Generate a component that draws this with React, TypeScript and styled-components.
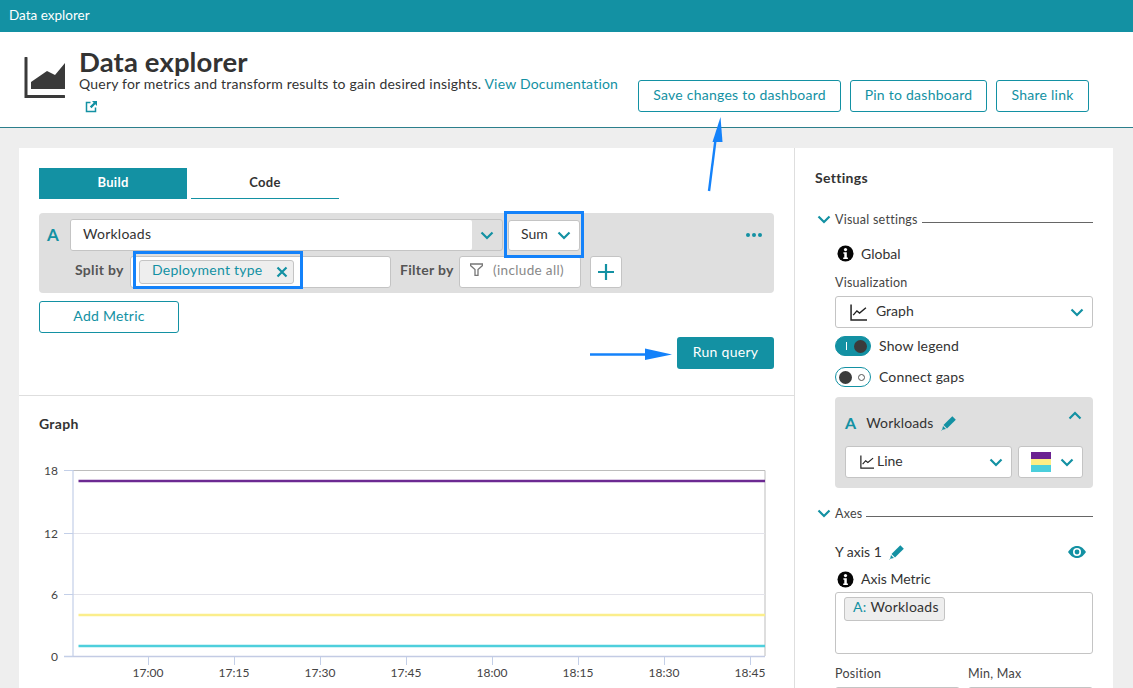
import React from "react";
import styled, { createGlobalStyle } from "styled-components";

const TEAL = "#1391a3";
const INK = "#333333";
const FIELD = "#c4c4c4";
const BLUE = "#1482fa";

const Global = createGlobalStyle`
  html, body { margin: 0; padding: 0; background: #eeeeee; }
  body { font-family: Lato, "Noto Sans", "Liberation Sans", sans-serif; color: ${INK}; }
  * { box-sizing: border-box; }
`;

const Page = styled.div`
  position: relative;
  width: 1133px;
  height: 688px;
  overflow: hidden;
  background: #eeeeee;
`;
const TopBar = styled.div`
  height: 32px;
  background: ${TEAL};
  color: #fff;
  font-size: 13.5px;
  line-height: 31px;
  padding-left: 9px;
`;
const PageHeader = styled.header`
  height: 96px;
  background: #fff;
  border-bottom: 1px solid #2c7f8c;
  display: flex;
  padding-left: 24px;
`;
const HeaderIcon = styled.svg`
  width: 41px;
  height: 41px;
  margin-top: 25px;
  flex: none;
`;
const HeaderText = styled.div`
  width: 559px;
  margin-left: 14px;
  padding-top: 15px;
  flex: none;
`;
const Title = styled.h1`
  margin: 0;
  font-size: 27.5px;
  line-height: 30px;
  font-weight: 700;
  color: #333;
  letter-spacing: 0.12px;
`;
const Desc = styled.p`
  margin: -4px 0 0;
  font-size: 14px;
  line-height: 22px;
  width: 545px;
  letter-spacing: 0.2px;
`;
const DocLink = styled.span`
  color: ${TEAL};
`;
const ExternalIcon = styled.svg`
  display: block;
  width: 13px;
  height: 13px;
  margin: 5px 0 0 6px;
`;
const HeaderActions = styled.div`
  display: flex;
  gap: 9px;
  margin-left: 0;
  padding-top: 48px;
`;
const OutlineButton = styled.button<{ $w: number }>`
  width: ${(p) => p.$w}px;
  height: 32px;
  border: 1px solid ${TEAL};
  border-radius: 3px;
  background: #fff;
  color: ${TEAL};
  font: inherit;
  font-size: 14px;
  letter-spacing: 0.25px;
  padding: 0 0 3px;
`;
const Card = styled.main`
  display: grid;
  grid-template-columns: 776px 1fr;
  margin: 20px 20px 0 19px;
  height: 560px;
  background: #fff;
`;
const LeftPane = styled.section`
  border-right: 1px solid #dedede;
  min-width: 0;
`;
const QueryArea = styled.div`
  height: 248px;
  padding: 20px 20px 0;
  border-bottom: 1px solid #dedede;
`;
const Tabs = styled.div`
  display: flex;
  gap: 4px;
`;
const Tab = styled.div<{ $active?: boolean }>`
  width: 148px;
  height: 31px;
  line-height: 29px;
  text-align: center;
  font-size: 13px;
  font-weight: 700;
  letter-spacing: 0.3px;
  background: ${(p) => (p.$active ? TEAL : "#fff")};
  color: ${(p) => (p.$active ? "#fff" : "#333")};
  border-bottom: 1px solid ${TEAL};
`;
const MetricPanel = styled.div`
  margin-top: 14px;
  height: 80px;
  background: #dfdfdf;
  border-radius: 4px;
  padding: 6px 0 0 8px;
  display: flex;
  flex-direction: column;
  gap: 5px;
`;
const MetricRow = styled.div`
  display: flex;
  align-items: center;
  height: 32px;
`;
const SeriesLetter = styled.span`
  width: 23px;
  color: ${TEAL};
  font-size: 17px;
  font-weight: 700;
  margin-bottom: 2px;
`;
const MetricField = styled.div`
  width: 433px;
  height: 32px;
  border: 1px solid ${FIELD};
  border-radius: 3px;
  display: flex;
`;
const MetricValue = styled.div`
  width: 401px;
  height: 30px;
  background: #fff;
  border-radius: 2px;
  font-size: 14px;
  line-height: 28px;
  padding-left: 12px;
  letter-spacing: 0.25px;
`;
const ChevronSlot = styled.div`
  flex: 1;
  display: flex;
  align-items: center;
  justify-content: center;
`;
const Chevron = styled.svg<{ $up?: boolean }>`
  width: 14px;
  height: 9px;
  flex: none;
  transform: ${(p) => (p.$up ? "rotate(180deg)" : "none")};
`;
const Lifted = styled.span<{ $by: number }>`
  margin-bottom: ${(p) => p.$by}px;
`;
const SumSelect = styled.div`
  width: 72px;
  height: 31px;
  margin-left: 5px;
  background: #fff;
  border: 1px solid ${FIELD};
  border-radius: 3px;
  display: flex;
  align-items: center;
  justify-content: space-between;
  padding: 0 8px 0 12px;
  font-size: 14px;
`;
const Dots = styled.span`
  margin-left: auto;
  margin-right: 12px;
  display: flex;
  gap: 2px;
`;
const Dot = styled.i`
  width: 4px;
  height: 4px;
  border-radius: 50%;
  background: ${TEAL};
`;
const RowLabel = styled.span<{ $w: number; $ml: number }>`
  width: ${(p) => p.$w}px;
  margin: 0 0 5px ${(p) => p.$ml}px;
  font-size: 14px;
  font-weight: 700;
  letter-spacing: 0.3px;
  color: #555;
  flex: none;
`;
const SplitField = styled.div`
  width: 261px;
  height: 32px;
  background: #fff;
  border: 1px solid ${FIELD};
  border-radius: 3px;
  display: flex;
  align-items: center;
  padding-left: 8px;
`;
const FilterField = styled.div`
  width: 122px;
  height: 32px;
  background: #fff;
  border: 1px solid ${FIELD};
  border-radius: 3px;
  display: flex;
  align-items: center;
  gap: 10px;
  padding: 0 0 5px 10px;
  color: #888;
  font-size: 13.5px;
  letter-spacing: 0.35px;
`;
const PlusButton = styled.div`
  width: 32px;
  height: 32px;
  margin-left: 9px;
  background: #fff;
  border: 1px solid ${FIELD};
  border-radius: 3px;
  display: flex;
  align-items: center;
  justify-content: center;
`;
const Tag = styled.span<{ $w: number }>`
  display: inline-flex;
  align-items: center;
  width: ${(p) => p.$w}px;
  height: 24px;
  background: #eeeeee;
  border: 1px solid ${FIELD};
  border-radius: 3px;
  font-size: 14px;
  letter-spacing: 0.25px;
  padding: 0 5px 0 12px;
  justify-content: space-between;
  flex: none;
`;
const TealText = styled.span`
  color: ${TEAL};
`;
const TagLabel = styled(TealText)`
  margin-bottom: 5px;
`;
const AddRow = styled.div`
  margin-top: 8px;
`;
const RunRow = styled.div`
  margin-top: 4px;
  display: flex;
  justify-content: flex-end;
`;
const RunButton = styled.button`
  width: 97px;
  height: 32px;
  border: 0;
  border-radius: 3px;
  background: ${TEAL};
  color: #fff;
  font: inherit;
  font-size: 14px;
  letter-spacing: 0.3px;
  padding: 0 0 3px;
`;
const GraphArea = styled.div`
  padding: 19px 20px 0;
`;
const SectionTitle = styled.h2`
  margin: 0;
  font-size: 14px;
  line-height: 17px;
  font-weight: 700;
  color: #333;
  letter-spacing: 0.3px;
`;
const Chart = styled.svg`
  display: block;
  margin-top: 28px;
  width: 736px;
  height: 228px;
  font-family: Lato, "Noto Sans", sans-serif;
`;
const RightPane = styled.aside`
  padding: 21px 20px 0 20px;
  min-width: 0;
`;
const GroupHead = styled.div<{ $mt: number }>`
  margin-top: ${(p) => p.$mt}px;
  display: flex;
  align-items: center;
  height: 16px;
  font-size: 12.5px;
  letter-spacing: 0.25px;
  color: #444;
`;
const GroupChevron = styled.span`
  width: 20px;
  display: flex;
  padding-left: 2px;
`;
const GroupRule = styled.span`
  flex: 1;
  height: 1px;
  margin: 6px 0 0 4px;
  background: #666;
`;
const Body = styled.div`
  padding-left: 20px;
`;
const InfoLine = styled.div<{ $mt: number }>`
  margin-top: ${(p) => p.$mt}px;
  display: flex;
  align-items: center;
  gap: 7px;
  padding-left: 2px;
  font-size: 14px;
  height: 18px;
`;
const FieldLabel = styled.div<{ $mt: number }>`
  margin-top: ${(p) => p.$mt}px;
  font-size: 12.5px;
  line-height: 16px;
  letter-spacing: 0.25px;
  color: #444;
`;
const Select = styled.div<{ $w?: number; $pl?: number; $mt?: number }>`
  width: ${(p) => (p.$w ? `${p.$w}px` : "auto")};
  height: 32px;
  margin-top: ${(p) => p.$mt ?? 0}px;
  background: #fff;
  border: 1px solid ${FIELD};
  border-radius: 3px;
  display: flex;
  align-items: center;
  font-size: 14px;
  padding: 0 8px 0 ${(p) => p.$pl ?? 14}px;
  gap: 9px;
`;
const Push = styled.span<{ $mr?: number }>`
  margin-left: auto;
  margin-right: ${(p) => p.$mr ?? 0}px;
  display: flex;
`;
const ToggleRow = styled.div<{ $mt: number }>`
  margin-top: ${(p) => p.$mt}px;
  display: flex;
  align-items: center;
  gap: 8px;
  height: 20px;
  font-size: 14px;
  letter-spacing: 0.15px;
`;
const Toggle = styled.span<{ $on?: boolean }>`
  width: 36px;
  height: 20px;
  border-radius: 10px;
  border: 1px solid ${TEAL};
  background: ${(p) => (p.$on ? TEAL : "#fff")};
  display: flex;
  flex-direction: ${(p) => (p.$on ? "row-reverse" : "row")};
  align-items: center;
  justify-content: space-between;
  padding: 0 3px 0 3px;
  flex: none;
`;
const Knob = styled.i`
  width: 13px;
  height: 13px;
  border-radius: 50%;
  background: #3b3b3b;
`;
const Hole = styled.i`
  width: 7px;
  height: 7px;
  border-radius: 50%;
  border: 1px solid #555;
  margin-right: 2px;
  background: #fff;
`;
const Tick = styled.i`
  width: 1px;
  height: 8px;
  background: #fff;
  margin-left: 7px;
`;
const SeriesPanel = styled.div`
  margin-top: 10px;
  height: 91px;
  padding: 15px 10px 0;
  background: #dfdfdf;
  border-radius: 4px;
`;
const SeriesHead = styled.div`
  display: flex;
  align-items: center;
  height: 22px;
  font-size: 14px;
  letter-spacing: 0.15px;
`;
const SeriesName = styled.span`
  margin: 0 7px 2px 10px;
`;
const SeriesLetterSmall = styled.span`
  color: ${TEAL};
  font-size: 16px;
  font-weight: 700;
  margin-bottom: 2px;
`;
const CollapseSlot = styled.span`
  margin-left: auto;
  margin-right: 1px;
  margin-top: -16px;
  display: flex;
`;
const SeriesSelects = styled.div`
  display: flex;
  gap: 6px;
  margin-top: 12px;
`;
const LineLabel = styled.span`
  margin: 0 0 3px -6px;
`;
const Swatch = styled.span`
  width: 20px;
  height: 20px;
  flex: none;
  display: flex;
  flex-direction: column;
`;
const SwatchBand = styled.i<{ $c: string }>`
  flex: 1;
  background: ${(p) => p.$c};
`;
const AxisHead = styled.div`
  margin-top: 21px;
  height: 20px;
  display: flex;
  align-items: center;
  gap: 7px;
  font-size: 14px;
`;
const MetricBox = styled.div`
  margin-top: 4px;
  height: 62px;
  border: 1px solid ${FIELD};
  border-radius: 3px;
  padding: 3px 8px;
`;
const AxisTag = styled(Tag)`
  padding: 0 0 4px 8px;
  justify-content: flex-start;
  gap: 4px;
`;
const PositionGrid = styled.div`
  margin-top: 12px;
  display: grid;
  grid-template-columns: 125px 125px;
  column-gap: 8px;
`;
const SmallField = styled.div`
  margin-top: 5px;
  height: 32px;
  border: 1px solid ${FIELD};
  border-radius: 3px;
`;
const Outline = styled.div<{ $x: number; $y: number; $w: number; $h: number }>`
  position: absolute;
  left: ${(p) => p.$x}px;
  top: ${(p) => p.$y}px;
  width: ${(p) => p.$w}px;
  height: ${(p) => p.$h}px;
  border: 3px solid ${BLUE};
  pointer-events: none;
`;
const Arrows = styled.svg`
  position: absolute;
  inset: 0;
  width: 1133px;
  height: 688px;
  pointer-events: none;
`;

const Down = ({ up }: { up?: boolean }) => (
  <Chevron $up={up} viewBox="0 0 14 9">
    <path d="M1.5 1.5 7 7l5.5-5.5" fill="none" stroke={TEAL} strokeWidth="2.2" />
  </Chevron>
);
const Info = () => (
  <svg width="17" height="17" viewBox="0 0 17 17" style={{ flex: "none" }}>
    <circle cx="8.5" cy="8.5" r="8" fill="#050505" />
    <circle cx="8.5" cy="4.6" r="1.6" fill="#fff" />
    <path d="M6.4 7.2h3.4v5.3h1.1v1.6H6.2v-1.6h1.1V8.8H6.4z" fill="#fff" />
  </svg>
);
const Pencil = () => (
  <svg width="16" height="16" viewBox="0 0 16 16" style={{ flex: "none" }}>
    <path d="M11.3 1.2 14.8 4.700 6 13.500 2.500 10z" fill={TEAL} />
    <path d="M2 11 5 14 1.500 14.700 0.500 15.800 0.200 15.500 1.200 14.500z" fill={TEAL} />
  </svg>
);
const LineGlyph = ({ size }: { size: number }) => (
  <svg width={size} height={size} viewBox="0 0 16 16" style={{ flex: "none" }}>
    <path d="M1 0.500V15H16" fill="none" stroke="#222" strokeWidth="1.400" />
    <path d="M3 10.500 6.500 6.500 9 8.500 15 3.500" fill="none" stroke="#222" strokeWidth="1.300" />
  </svg>
);

const xTicks: [number, string][] = [
  [148, "17:00"], [234, "17:15"], [320, "17:30"], [406, "17:45"],
  [492, "18:00"], [578, "18:15"], [664, "18:30"], [750, "18:45"],
];
const yTicks: [number, string][] = [[470.5, "18"], [533.5, "12"], [594.5, "6"], [656.5, "0"]];

export default function App() {
  return (
    <Page>
      <Global />
      <TopBar>Data explorer</TopBar>
      <PageHeader>
        <HeaderIcon viewBox="0 0 41 41">
          <path d="M2 1v38.500h38" fill="none" stroke="#3a3a3a" strokeWidth="3" strokeLinecap="round" />
          <path d="M7 32V25L23 14l8 4L41 6V32z" fill="#3a3a3a" />
        </HeaderIcon>
        <HeaderText>
          <Title>Data explorer</Title>
          <Desc>
            Query for metrics and transform results to gain desired insights. <DocLink>View Documentation</DocLink>
          </Desc>
          <ExternalIcon viewBox="0 0 13 13">
            <path d="M10.500 7.500v4h-9v-9h4" fill="none" stroke={TEAL} strokeWidth="1.500" />
            <path d="M7 1h5v5L10.300 4.300 6.500 8.200 4.800 6.500 8.700 2.700z" fill={TEAL} />
          </ExternalIcon>
        </HeaderText>
        <HeaderActions>
          <OutlineButton $w={203}>Save changes to dashboard</OutlineButton>
          <OutlineButton $w={137}>Pin to dashboard</OutlineButton>
          <OutlineButton $w={93}>Share link</OutlineButton>
        </HeaderActions>
      </PageHeader>
      <Card>
        <LeftPane>
          <QueryArea>
            <Tabs>
              <Tab $active>Build</Tab>
              <Tab>Code</Tab>
            </Tabs>
            <MetricPanel>
              <MetricRow>
                <SeriesLetter>A</SeriesLetter>
                <MetricField>
                  <MetricValue>Workloads</MetricValue>
                  <ChevronSlot><Down /></ChevronSlot>
                </MetricField>
                <SumSelect><Lifted $by={4}>Sum</Lifted><Down /></SumSelect>
                <Dots><Dot /><Dot /><Dot /></Dots>
              </MetricRow>
              <MetricRow>
                <RowLabel $w={55} $ml={28}>Split by</RowLabel>
                <SplitField>
                  <Tag $w={155}>
                    <TagLabel>Deployment type</TagLabel>
                    <svg width="12" height="12" viewBox="0 0 12 12">
                      <path d="M1.500 1.500l9 9m0-9l-9 9" stroke={TEAL} strokeWidth="2.200" />
                    </svg>
                  </Tag>
                </SplitField>
                <RowLabel $w={59} $ml={9}>Filter by</RowLabel>
                <FilterField>
                  <svg width="13" height="13" viewBox="0 0 13 13" style={{ flex: "none" }}>
                    <path d="M0.500 1h12v1.500L8 6.500V12.500H5V6.500L0.500 2.500z" fill="none" stroke="#777" strokeWidth="1.300" />
                  </svg>
                  (include all)
                </FilterField>
                <PlusButton>
                  <svg width="16" height="16" viewBox="0 0 16 16">
                    <path d="M8 0v16M0 8h16" stroke={TEAL} strokeWidth="2.200" />
                  </svg>
                </PlusButton>
              </MetricRow>
            </MetricPanel>
            <AddRow>
              <OutlineButton $w={140}>Add Metric</OutlineButton>
            </AddRow>
            <RunRow>
              <RunButton>Run query</RunButton>
            </RunRow>
          </QueryArea>
          <GraphArea>
            <SectionTitle>Graph</SectionTitle>
            <Chart viewBox="39 460 736 228">
              <path d="M73 470.500H765V656" fill="none" stroke="#bdbdbd" />
              <path d="M73 533.500H765M73 594.500H765" stroke="#e3e3ea" />
              <path d="M73 470V656.500" stroke="#c3cfe8" strokeWidth="1.200" />
              <path d="M64 656.500H765" stroke="#c3cbe4" strokeWidth="1.500" />
              {yTicks.map(([y, t]) => (
                <g key={t}>
                  <path d={`M64 ${y}H73`} stroke="#c3cfe8" />
                  <text x="58" y={y + 4} textAnchor="end" fontSize="12" fill="#444">{t}</text>
                </g>
              ))}
              {xTicks.map(([x, t]) => (
                <g key={t}>
                  <path d={`M${x + 0.5} 657V665`} stroke="#c3cfe8" />
                  <text x={x} y="677" textAnchor="middle" fontSize="12" fill="#444">{t}</text>
                </g>
              ))}
              <path d="M78.500 481H765" stroke="#6c2a92" strokeWidth="2.600" />
              <path d="M78.500 615H765" stroke="#fbee8c" strokeWidth="2.600" />
              <path d="M78.500 646H765" stroke="#4ecfdc" strokeWidth="2.600" />
            </Chart>
          </GraphArea>
        </LeftPane>
        <RightPane>
          <SectionTitle>Settings</SectionTitle>
          <GroupHead $mt={25}>
            <GroupChevron><Down /></GroupChevron>
            Visual settings
            <GroupRule />
          </GroupHead>
          <Body>
            <InfoLine $mt={17}><Info />Global</InfoLine>
            <FieldLabel $mt={13}>Visualization</FieldLabel>
            <Select $mt={5}>
              <LineGlyph size={17} />
              <Lifted $by={3}>Graph</Lifted>
              <Push><Down /></Push>
            </Select>
            <ToggleRow $mt={8}>
              <Toggle $on><Knob /><Tick /></Toggle>
              <Lifted $by={2}>Show legend</Lifted>
            </ToggleRow>
            <ToggleRow $mt={11}>
              <Toggle><Knob /><Hole /></Toggle>
              <Lifted $by={2}>Connect gaps</Lifted>
            </ToggleRow>
            <SeriesPanel>
              <SeriesHead>
                <SeriesLetterSmall>A</SeriesLetterSmall>
                <SeriesName>Workloads</SeriesName>
                <Pencil />
                <CollapseSlot><Down up /></CollapseSlot>
              </SeriesHead>
              <SeriesSelects>
                <Select $w={167}>
                  <LineGlyph size={14} />
                  <LineLabel>Line</LineLabel>
                  <Push><Down /></Push>
                </Select>
                <Select $w={65} $pl={12}>
                  <Swatch>
                    <SwatchBand $c="#6b2291" />
                    <SwatchBand $c="#fdee85" />
                    <SwatchBand $c="#4bcfdc" />
                  </Swatch>
                  <Push><Down /></Push>
                </Select>
              </SeriesSelects>
            </SeriesPanel>
          </Body>
          <GroupHead $mt={17}>
            <GroupChevron><Down /></GroupChevron>
            Axes
            <GroupRule />
          </GroupHead>
          <Body>
            <AxisHead>
              <Lifted $by={2}>Y axis 1</Lifted>
              <Pencil />
              <Push $mr={7}>
                <svg width="18" height="12" viewBox="0 0 18 12">
                  <path d="M0 6C3 1.500 6 0 9 0s6 1.500 9 6c-3 4.500-6 6-9 6S3 10.500 0 6z" fill={TEAL} />
                  <circle cx="9" cy="6" r="4" fill="#fff" />
                  <circle cx="9" cy="6" r="2.400" fill={TEAL} />
                </svg>
              </Push>
            </AxisHead>
            <InfoLine $mt={8}><Info /><Lifted $by={2}>Axis Metric</Lifted></InfoLine>
            <MetricBox>
              <AxisTag $w={101}><TealText>A:</TealText> Workloads</AxisTag>
            </MetricBox>
            <PositionGrid>
              <div>
                <FieldLabel $mt={0}>Position</FieldLabel>
                <SmallField />
              </div>
              <div>
                <FieldLabel $mt={0}>Min, Max</FieldLabel>
                <SmallField />
              </div>
            </PositionGrid>
          </Body>
        </RightPane>
      </Card>
      <Outline $x={504} $y={211} $w={80} $h={47} />
      <Outline $x={133} $y={251} $w={170} $h={38} />
      <Arrows viewBox="0 0 1133 688">
        <path d="M709 191 715.500 140" stroke={BLUE} strokeWidth="2.400" />
        <path d="M720.500 117 712.500 142 722.500 142z" fill={BLUE} />
        <path d="M590 354.500H646" stroke={BLUE} strokeWidth="2.400" />
        <path d="M645 348.500 672 354.500 645 360z" fill={BLUE} />
      </Arrows>
    </Page>
  );
}
